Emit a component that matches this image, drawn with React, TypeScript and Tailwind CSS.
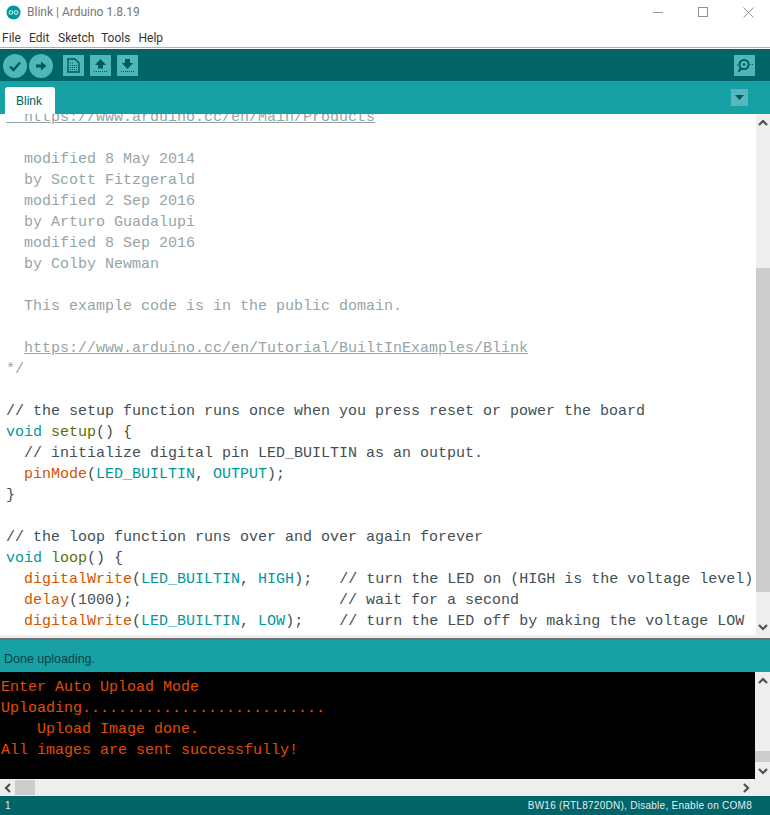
const mono = "font-['Liberation_Mono','Courier_New',monospace]";

const C = "text-[#95A5A6]"; // block comment
const D = "text-[#434F54]"; // line comment + punctuation
const T = "text-[#00979C]"; // keyword / constant
const F = "text-[#D35400]"; // function
const S = "text-[#5E6D03]"; // structure function

type Part = [string, string];
const codeLines: Part[][] = [
  [[C + " underline", "  https://www.arduino.cc/en/Main/Products"]],
  [],
  [[C, "  modified 8 May 2014"]],
  [[C, "  by Scott Fitzgerald"]],
  [[C, "  modified 2 Sep 2016"]],
  [[C, "  by Arturo Guadalupi"]],
  [[C, "  modified 8 Sep 2016"]],
  [[C, "  by Colby Newman"]],
  [],
  [[C, "  This example code is in the public domain."]],
  [],
  [[C, "  "], [C + " underline", "https://www.arduino.cc/en/Tutorial/BuiltInExamples/Blink"]],
  [[C, "*/"]],
  [],
  [[D, "// the setup function runs once when you press reset or power the board"]],
  [[T, "void"], [D, " "], [S, "setup"], [D, "() {"]],
  [[D, "  // initialize digital pin LED_BUILTIN as an output."]],
  [[D, "  "], [F, "pinMode"], [D, "("], [T, "LED_BUILTIN"], [D, ", "], [T, "OUTPUT"], [D, ");"]],
  [[D, "}"]],
  [],
  [[D, "// the loop function runs over and over again forever"]],
  [[T, "void"], [D, " "], [S, "loop"], [D, "() {"]],
  [[D, "  "], [F, "digitalWrite"], [D, "("], [T, "LED_BUILTIN"], [D, ", "], [T, "HIGH"], [D, ");   // turn the LED on (HIGH is the voltage level)"]],
  [[D, "  "], [F, "delay"], [D, "(1000);                       // wait for a second"]],
  [[D, "  "], [F, "digitalWrite"], [D, "("], [T, "LED_BUILTIN"], [D, ", "], [T, "LOW"], [D, ");    // turn the LED off by making the voltage LOW"]],
];

const consoleLines = [
  "Enter Auto Upload Mode",
  "Uploading...........................",
  "    Upload Image done.",
  "All images are sent successfully!",
];

function Arrow({ dir }: { dir: "up" | "down" | "left" | "right" }) {
  const d = {
    up: "M1 6 L5 2 L9 6",
    down: "M1 2 L5 6 L9 2",
    left: "M6 1 L2 5 L6 9",
    right: "M2 1 L6 5 L2 9",
  }[dir];
  const box = dir === "up" || dir === "down" ? "0 0 10 8" : "0 0 8 10";
  const size = dir === "up" || dir === "down" ? "w-[10px] h-[8px]" : "w-[8px] h-[10px]";
  return (
    <svg viewBox={box} className={size}>
      <path d={d} fill="none" stroke="#505050" strokeWidth="2.2" />
    </svg>
  );
}

function ToolSquare({ children }: { children: React.ReactNode }) {
  return <div className="w-[21px] h-[21px] bg-[#4DB7BA] flex items-center justify-center">{children}</div>;
}

function ToolCircle({ children }: { children: React.ReactNode }) {
  return <div className="w-[24px] h-[24px] rounded-full bg-[#4DB7BA] flex items-center justify-center">{children}</div>;
}

export default function App() {
  return (
    <div className="w-[770px] h-[815px] flex flex-col bg-white overflow-hidden font-['Roboto',sans-serif]">
      {/* Title bar */}
      <div className="h-[28px] flex items-center shrink-0">
        <svg viewBox="0 0 16 16" className="w-[15px] h-[15px] ml-[6px] mt-[-3px]">
          <circle cx="8" cy="8" r="7.5" fill="#00979C" />
          <circle cx="5.3" cy="8" r="2" fill="none" stroke="#fff" strokeWidth="1" />
          <circle cx="10.7" cy="8" r="2" fill="none" stroke="#fff" strokeWidth="1" />
        </svg>
        <span className="ml-[6px] mt-[-4px] text-[12px] text-[#777777]">Blink | Arduino 1.8.19</span>
        <div className="ml-auto flex items-center mt-[-4px]">
          <div className="w-[10px] h-px bg-[#9a9a9a]" />
          <div className="ml-[35px] w-[10px] h-[10px] border border-[#8f8f8f]" />
          <svg viewBox="0 0 11 11" className="ml-[35px] mr-[16px] w-[11px] h-[11px]">
            <path d="M0.5 0.5 L10.5 10.5 M10.5 0.5 L0.5 10.5" stroke="#8f8f8f" strokeWidth="1" />
          </svg>
        </div>
      </div>

      {/* Menu */}
      <div className="h-[19px] shrink-0 flex items-center pl-[2px] text-[12px] text-[#333]">
        <span className="w-[27px]">File</span>
        <span className="w-[29px]">Edit</span>
        <span className="w-[43px]">Sketch</span>
        <span className="w-[37.5px]">Tools</span>
        <span>Help</span>
      </div>
      <div className="h-px bg-[#b0b0b0] shrink-0" />
      <div className="h-px bg-white shrink-0" />

      {/* Toolbar */}
      <div className="h-[32px] shrink-0 bg-[#006468] flex items-center pl-[3px] pr-[15px] pt-px">
        <ToolCircle>
          <svg viewBox="0 0 14 14" className="w-[14px] h-[14px]">
            <path d="M2 7.5 L5.5 11 L12 3.5" fill="none" stroke="#00565a" strokeWidth="2.4" />
          </svg>
        </ToolCircle>
        <div className="w-[2px]" />
        <ToolCircle>
          <svg viewBox="0 0 14 14" className="w-[14px] h-[14px]">
            <path d="M2 5.5 H7 V2.5 L12.5 7 L7 11.5 V8.5 H2 Z" fill="#00565a" />
          </svg>
        </ToolCircle>
        <div className="w-[10px]" />
        <div className="flex gap-[6px]">
          <ToolSquare>
            <svg viewBox="0 0 13 15" className="w-[13px] h-[15px]">
              <path d="M1 1 H8 L12 5 V14 H1 Z" fill="none" stroke="#00565a" strokeWidth="1.4" />
              <path d="M3 5 H7 M3 7.5 H10 M3 9.5 H10 M3 11.5 H10" stroke="#00565a" strokeWidth="1.2" strokeDasharray="1 1" />
            </svg>
          </ToolSquare>
          <ToolSquare>
            <svg viewBox="0 0 15 15" className="w-[15px] h-[15px]">
              <path d="M7.5 1 L13 7 H10 V10.5 H5 V7 H2 Z" fill="#00565a" />
              <path d="M1 13.5 H14" stroke="#00565a" strokeWidth="1" strokeDasharray="1 1" />
            </svg>
          </ToolSquare>
          <ToolSquare>
            <svg viewBox="0 0 15 15" className="w-[15px] h-[15px]">
              <path d="M5 1 H10 V5 H13 L7.5 11 L2 5 H5 Z" fill="#00565a" />
              <path d="M1 13.5 H14" stroke="#00565a" strokeWidth="1" strokeDasharray="1 1" />
            </svg>
          </ToolSquare>
        </div>
        <div className="ml-auto">
          <ToolSquare>
            <svg viewBox="0 0 19 17" className="w-[19px] h-[17px]">
              <circle cx="9" cy="7.5" r="4.6" fill="none" stroke="#00565a" strokeWidth="1.8" />
              <circle cx="9" cy="7.5" r="1.2" fill="#00565a" />
              <path d="M6 11.5 L3.5 14.5" stroke="#00565a" strokeWidth="2" />
              <path d="M2 8 H3 M15 7.5 H16 M17 7.5 H18" stroke="#00565a" strokeWidth="1" />
            </svg>
          </ToolSquare>
        </div>
      </div>

      {/* Tabs */}
      <div className="h-[33px] shrink-0 bg-[#17A1A5] flex pl-[5px] pr-[22px]">
        <div className="mt-[6px] w-[50px] h-[27px] bg-white rounded-t-[3px] flex items-center justify-center pr-[2px] text-[12px] text-[#005c60] font-['Liberation_Sans',sans-serif]">
          Blink
        </div>
        <div className="ml-auto mt-[8px] w-[17px] h-[17px] bg-[#55B9BC] flex items-center justify-center">
          <svg viewBox="0 0 9 5" className="w-[9px] h-[5px]">
            <path d="M0 0 H9 L4.5 5 Z" fill="#00565a" />
          </svg>
        </div>
      </div>

      {/* Editor */}
      <div className="h-[521px] shrink-0 flex overflow-hidden">
        <div className={`flex-1 overflow-hidden pl-[6px] text-[15px] leading-[21px] ${mono}`}>
          <div className="mt-[-7px]">
            {codeLines.map((parts, i) => (
              <div key={i} className="h-[21px] whitespace-pre">
                {parts.map(([cls, text], j) => (
                  <span key={j} className={cls}>{text}</span>
                ))}
              </div>
            ))}
          </div>
        </div>
        <div className="w-[14px] shrink-0 bg-[#EEEEEE] flex flex-col items-center">
          <div className="h-[17px] flex items-center"><Arrow dir="up" /></div>
          <div className="mt-[137px] w-full h-[324px] bg-[#CCCCCC]" />
          <div className="mt-auto h-[17px] flex items-center"><Arrow dir="down" /></div>
        </div>
      </div>

      {/* Divider */}
      <div className="h-[3px] bg-[#EEEEEE] shrink-0" />
      <div className="h-[2px] bg-[#6F6F6F] shrink-0" />

      {/* Status */}
      <div className="h-[32px] shrink-0 bg-[#17A1A5] flex items-center pl-[4px] pt-[6px] text-[12.5px] text-[#0B3F42] font-['Liberation_Sans',sans-serif]">
        Done uploading.
      </div>

      {/* Console */}
      <div className="h-[107px] shrink-0 flex overflow-hidden">
        <div className={`flex-1 bg-black pl-[1px] pt-[5px] text-[15px] leading-[21px] text-[#E34C00] ${mono}`}>
          {consoleLines.map((line, i) => (
            <div key={i} className="h-[21px] whitespace-pre">{line}</div>
          ))}
        </div>
        <div className="w-[15px] shrink-0 bg-[#EEEEEE] flex flex-col items-center">
          <div className="h-[17px] flex items-center"><Arrow dir="up" /></div>
          <div className="mt-[62px] w-full h-[11px] bg-[#CCCCCC]" />
          <div className="mt-auto h-[17px] flex items-center"><Arrow dir="down" /></div>
        </div>
      </div>

      {/* Console horizontal scrollbar */}
      <div className="h-[17px] shrink-0 bg-[#EEEEEE] flex items-center pr-[20px]">
        <div className="w-[15px] flex justify-center"><Arrow dir="left" /></div>
        <div className="w-[20px] h-[15px] bg-[#CCCCCC]" />
        <div className="ml-auto"><Arrow dir="right" /></div>
      </div>

      {/* Footer */}
      <div className="flex-1 bg-[#006468] flex items-center justify-between pl-[5px] pr-[18px] text-[10px] text-[#E5EFEF] font-['Liberation_Sans',sans-serif]">
        <span>1</span>
        <span className="tracking-[0.27px]">BW16 (RTL8720DN), Disable, Enable on COM8</span>
      </div>
    </div>
  );
}
